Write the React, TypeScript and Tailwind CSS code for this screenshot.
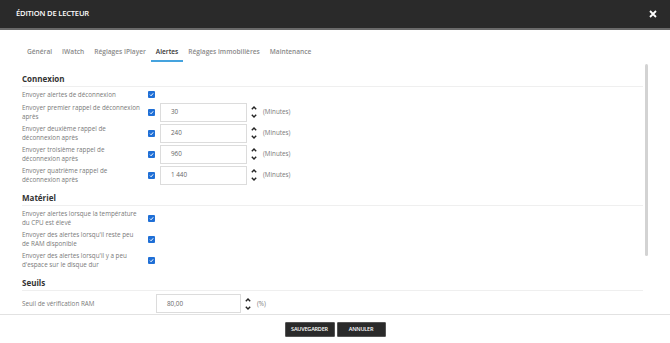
import React from "react";

const Check = () => (
  <span className="flex h-[7px] w-[7px] shrink-0 items-center justify-center rounded-[1px] bg-[#1f6fd6]">
    <svg width="5" height="5" viewBox="0 0 10 10">
      <path d="M2 5.3 4.2 7.5 8.3 2.7" fill="none" stroke="#fff" strokeWidth="2" />
    </svg>
  </span>
);

const Spinner = () => (
  <div className="flex w-[6px] flex-col items-center gap-[4px]">
    <svg width="6" height="4" viewBox="0 0 6 4">
      <path d="M0.8 3.3 3 1.1 5.2 3.3" fill="none" stroke="#222" strokeWidth="1.4" />
    </svg>
    <svg width="6" height="4" viewBox="0 0 6 4">
      <path d="M0.8 0.8 3 3 5.2 0.8" fill="none" stroke="#222" strokeWidth="1.4" />
    </svg>
  </div>
);

const Label = ({ lines, w }: { lines: string[]; w: string }) => (
  <div className={`${w} shrink-0 text-[6.3px] leading-[9px] text-[#7a7a7a]`}>
    {lines.map((l) => (
      <div key={l} className="whitespace-nowrap">
        {l}
      </div>
    ))}
  </div>
);

const Heading = ({ children }: { children: React.ReactNode }) => (
  <div className="border-b border-[#efefef] pb-[2px] text-[8px] font-bold leading-[10px] text-[#333]">
    {children}
  </div>
);

const NumRow = ({ lines, value }: { lines: string[]; value: string }) => (
  <div className="flex h-[20px] items-center">
    <Label lines={lines} w="w-[126px]" />
    <Check />
    <div className="ml-[5px] flex h-[19px] w-[87px] items-center border border-[#dcdcdc] pl-[10px] text-[6.3px] text-[#666]">
      {value}
    </div>
    <div className="ml-[4px]">
      <Spinner />
    </div>
    <span className="ml-[6px] text-[6.3px] text-[#7a7a7a]">(Minutes)</span>
  </div>
);

const CheckRow = ({ lines }: { lines: string[] }) => (
  <div className="flex h-[20px] items-center">
    <Label lines={lines} w="w-[126px]" />
    <Check />
  </div>
);

const tabs = ["Général", "IWatch", "Réglages IPlayer", "Alertes", "Réglages immobilières", "Maintenance"];

export default function App() {
  return (
    <div className="flex h-[343px] w-[670px] flex-col overflow-hidden bg-white font-['Open_Sans',sans-serif]">
      {/* header */}
      <div className="flex h-[30px] shrink-0 items-center justify-between border-b-2 border-[#6a6a6a] bg-[#2a2a2a] pl-[16px] pr-[13px]">
        <span className="text-[7.6px] font-semibold tracking-[-0.2px] text-white">ÉDITION DE LECTEUR</span>
        <svg width="8" height="8" viewBox="0 0 8 8">
          <path d="M1 1 7 7M7 1 1 7" stroke="#fff" strokeWidth="1.8" />
        </svg>
      </div>

      {/* tabs */}
      <div className="mt-[17px] flex gap-[10px] pl-[27px]">
        {tabs.map((t) => (
          <div
            key={t}
            className={`border-b-2 pb-[3px] text-[6.6px] font-semibold leading-[10px] ${
              t === "Alertes" ? "-mx-[5px] border-[#45a3de] px-[5px] text-[#333]" : "border-transparent text-[#8a8a8a]"
            }`}
          >
            {t}
          </div>
        ))}
      </div>

      {/* body */}
      <div className="flex h-[252px] shrink-0 overflow-hidden">
        <div className="w-[643px] pl-[22px] pt-[12px]">
          <Heading>Connexion</Heading>
          <div className="flex flex-col gap-[1px]">
            <div className="flex h-[14px] items-center">
              <Label lines={["Envoyer alertes de déconnexion"]} w="w-[126px]" />
              <Check />
            </div>
            <NumRow lines={["Envoyer premier rappel de déconnexion", "après"]} value="30" />
            <NumRow lines={["Envoyer deuxième rappel de", "déconnexion après"]} value="240" />
            <NumRow lines={["Envoyer troisième rappel de", "déconnexion après"]} value="960" />
            <NumRow lines={["Envoyer quatrième rappel de", "déconnexion après"]} value="1 440" />
          </div>

          <div className="mt-[8px]">
            <Heading>Matériel</Heading>
          </div>
          <div className="mt-[2px] flex flex-col gap-[1px]">
            <CheckRow lines={["Envoyer alertes lorsque la température", "du CPU est élevé"]} />
            <CheckRow lines={["Envoyer des alertes lorsqu'il reste peu", "de RAM disponible"]} />
            <CheckRow lines={["Envoyer des alertes lorsqu'il y a peu", "d'espace sur le disque dur"]} />
          </div>

          <div className="mt-[8px]">
            <Heading>Seuils</Heading>
          </div>
          <div className="mt-[3px] flex h-[19px] items-center">
            <Label lines={["Seuil de vérification RAM"]} w="w-[134px]" />
            <div className="flex h-[19px] w-[85px] items-center border border-[#dcdcdc] pl-[10px] text-[6.3px] text-[#666]">
              80,00
            </div>
            <div className="ml-[4px]">
              <Spinner />
            </div>
            <span className="ml-[6px] text-[6.3px] text-[#7a7a7a]">(%)</span>
          </div>
        </div>
        <div className="ml-[2px] mt-[2px] h-[192px] w-[3px] rounded-full bg-[#d3d3d3]" />
      </div>

      {/* footer */}
      <div className="flex flex-1 justify-center gap-[2px] border-t border-[#e2e2e2] pt-[7px]">
        <button className="h-[15px] w-[50px] rounded-[1px] border border-[#555] bg-[#2a2a2a] text-[5.5px] font-semibold tracking-[-0.2px] text-white">
          SAUVEGARDER
        </button>
        <button className="h-[15px] w-[49px] rounded-[1px] border border-[#555] bg-[#2a2a2a] text-[5.5px] font-semibold tracking-[-0.2px] text-white">
          ANNULER
        </button>
      </div>
    </div>
  );
}
